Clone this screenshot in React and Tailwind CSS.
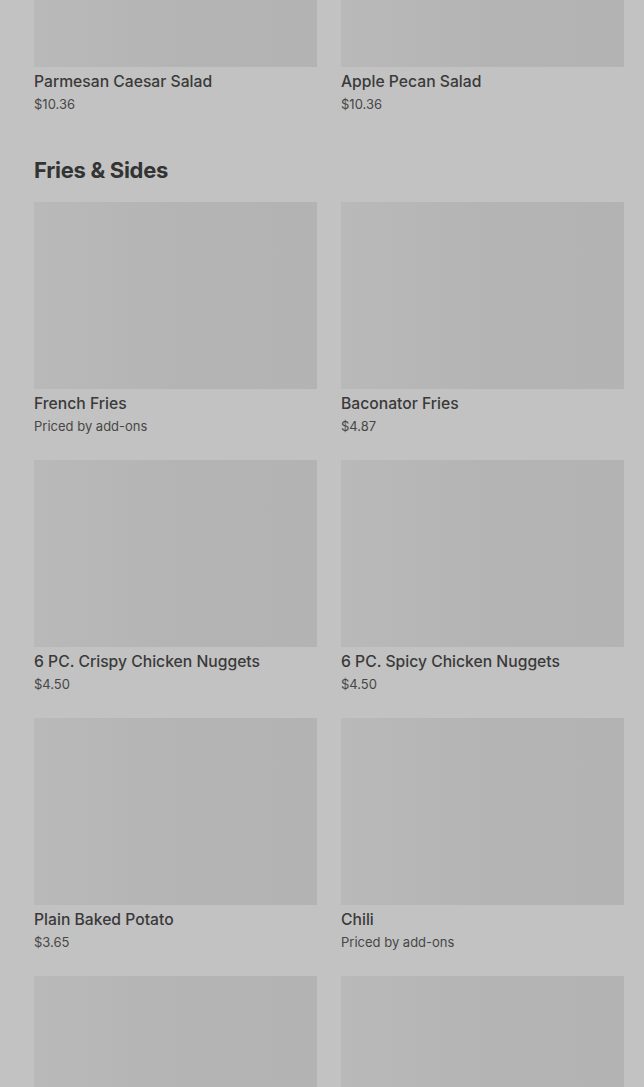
import React from 'react';

const rows = [
  [
    { name: 'French Fries', price: 'Priced by add-ons' },
    { name: 'Baconator Fries', price: '$4.87' },
  ],
  [
    { name: '6 PC. Crispy Chicken Nuggets', price: '$4.50' },
    { name: '6 PC. Spicy Chicken Nuggets', price: '$4.50' },
  ],
  [
    { name: 'Plain Baked Potato', price: '$3.65' },
    { name: 'Chili', price: 'Priced by add-ons' },
  ],
];

const Thumb = ({ className = 'h-[187px]' }) => (
  <div className={`${className} w-full bg-[#b4b4b4] bg-gradient-to-r from-[#b9b9b9] via-[#b4b4b4] to-[#b3b3b3]`} />
);

const Item = ({ name, price, thumb }) => (
  <div className="flex flex-col">
    <Thumb className={thumb} />
    <p className="mt-[3px] text-[15.7px] leading-6 font-medium text-[#3a3a3a]">{name}</p>
    <p className="-mt-px text-[13px] leading-[22px] text-[#474747]">{price}</p>
  </div>
);

export default function App() {
  return (
    <div className="min-h-screen overflow-hidden bg-[#c2c2c2] pl-[34px] pr-[20px]" style={{ fontFamily: 'Inter, "Noto Sans", sans-serif' }}>
      <div className="grid grid-cols-2 gap-x-6">
        <Item name="Parmesan Caesar Salad" price="$10.36" thumb="h-[67px]" />
        <Item name="Apple Pecan Salad" price="$10.36" thumb="h-[67px]" />
      </div>

      <h2 className="mt-[41px] text-[22px] leading-7 font-bold tracking-[-0.3px] text-[#333333]">Fries &amp; Sides</h2>

      <div className="mt-[18px] grid grid-cols-2 gap-x-6 gap-y-[23px]">
        {rows.flat().map((it) => (
          <Item key={it.name} {...it} />
        ))}
        <Thumb />
        <Thumb />
      </div>
    </div>
  );
}
